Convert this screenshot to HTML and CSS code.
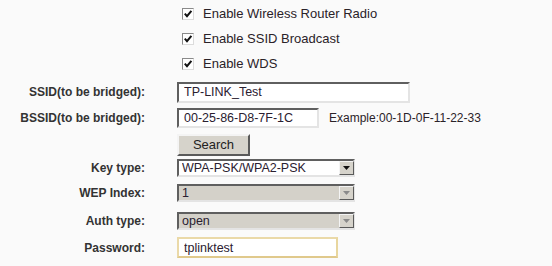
FILE: index.html
```html
<!DOCTYPE html>
<html lang="en">
<head>
  <meta charset="UTF-8">
  <title>Wireless Settings</title>
  <link rel="stylesheet" href="styles.css">
</head>
<body>
  <div class="checks">
    <label class="check"><span class="box"><svg viewBox="0 0 10 10"><path d="M1.8 4.6 L4 7.2 L8.4 1.8"/></svg></span>Enable Wireless Router Radio</label>
    <label class="check"><span class="box"><svg viewBox="0 0 10 10"><path d="M1.8 4.6 L4 7.2 L8.4 1.8"/></svg></span>Enable SSID Broadcast</label>
    <label class="check"><span class="box"><svg viewBox="0 0 10 10"><path d="M1.8 4.6 L4 7.2 L8.4 1.8"/></svg></span>Enable WDS</label>
  </div>

  <div class="fields">
    <div class="label">SSID(to be bridged):</div>
    <div class="field"><input class="text ssid" type="text" value="TP-LINK_Test"></div>

    <div class="label">BSSID(to be bridged):</div>
    <div class="field">
      <input class="text bssid" type="text" value="00-25-86-D8-7F-1C">
      <span class="hint">Example:00-1D-0F-11-22-33</span>
    </div>

    <div class="label"></div>
    <div class="field"><button class="btn">Search</button></div>

    <div class="label">Key type:</div>
    <div class="field">
      <span class="select">
        <select><option>WPA-PSK/WPA2-PSK</option></select>
        <span class="arrow"><svg viewBox="0 0 7 4"><path d="M0 0 H7 L3.5 4 Z"/></svg></span>
      </span>
    </div>

    <div class="label">WEP Index:</div>
    <div class="field">
      <span class="select off">
        <select disabled><option>1</option></select>
        <span class="arrow"><svg viewBox="0 0 7 4"><path d="M0 0 H7 L3.5 4 Z"/></svg></span>
      </span>
    </div>

    <div class="label">Auth type:</div>
    <div class="field">
      <span class="select off">
        <select disabled><option>open</option></select>
        <span class="arrow"><svg viewBox="0 0 7 4"><path d="M0 0 H7 L3.5 4 Z"/></svg></span>
      </span>
    </div>

    <div class="label">Password:</div>
    <div class="field"><input class="text pass" type="text" value="tplinktest"></div>
  </div>
</body>
</html>
```

FILE: styles.css
```css
body {
  margin: 0;
  background-color: #fafafa;
  font-family: "Liberation Sans", Arial, sans-serif;
  color: #2a2228;
  overflow: hidden;
}

.checks {
  padding-top: 1px;
  padding-left: 182px;
}

.check {
  display: flex;
  align-items: center;
  height: 25px;
  font-size: 13px;
}

.box {
  width: 10px;
  height: 10px;
  margin-right: 9px;
  background: #fff;
  border: 1px solid;
  border-color: #8a8a8a #dcdcdc #dcdcdc #8a8a8a;
  display: flex;
}

.box svg {
  width: 10px;
  height: 10px;
  fill: none;
  stroke: #111;
  stroke-width: 2;
}

.fields {
  display: grid;
  grid-template-columns: 145px 1fr;
  grid-template-rows: 26px 26px 27px 20px 30px 26px 27px;
  column-gap: 32px;
  margin-top: 3px;
  align-items: center;
}

.label {
  text-align: right;
  font-size: 12px;
  font-weight: bold;
  color: #333;
}

.field {
  display: flex;
  align-items: center;
  font-size: 12.5px;
}

.text {
  box-sizing: border-box;
  height: 21px;
  padding: 0 5px;
  font-family: inherit;
  font-size: 12.5px;
  color: #2a2030;
  background: #fff;
  border: 2px solid;
  border-color: #5f5f5f #e4e4e4 #e4e4e4 #5f5f5f;
  outline: none;
}

.ssid {
  width: 233px;
}

.bssid {
  width: 142px;
  height: 20px;
}

.pass {
  width: 161px;
  border-color: #ead9a8 #e8d69e #e0c98c #ead9a8;
}

.hint {
  margin-left: 10px;
  font-size: 12px;
}

.btn {
  box-sizing: border-box;
  width: 73px;
  height: 22px;
  padding: 0;
  font-family: inherit;
  font-size: 13px;
  color: #222;
  background: #d6d3cb;
  border: 2px solid;
  border-color: #f4f4f4 #5a5a5a #5a5a5a #f4f4f4;
}

.select {
  position: relative;
  display: block;
  width: 178px;
  height: 18px;
}

.select select {
  box-sizing: border-box;
  appearance: none;
  width: 100%;
  height: 100%;
  padding: 0 0 0 3px;
  font-family: inherit;
  font-size: 12.5px;
  color: #2a2030;
  background: #fff;
  border: 2px solid;
  border-color: #5f5f5f #e4e4e4 #e4e4e4 #5f5f5f;
  border-radius: 0;
  outline: none;
}

.select.off select {
  background: #d4d1c9;
  color: #2a2030;
  opacity: 1;
}

.arrow {
  position: absolute;
  top: 2px;
  right: 1px;
  width: 15px;
  height: 14px;
  box-sizing: border-box;
  background: #d6d3cb;
  border: 1px solid;
  border-color: #f4f4f4 #5a5a5a #5a5a5a #f4f4f4;
  display: flex;
  align-items: center;
  justify-content: center;
}

.arrow svg {
  width: 7px;
  height: 4px;
  fill: #111;
}

.off .arrow svg {
  fill: #8a8a8a;
}
```
